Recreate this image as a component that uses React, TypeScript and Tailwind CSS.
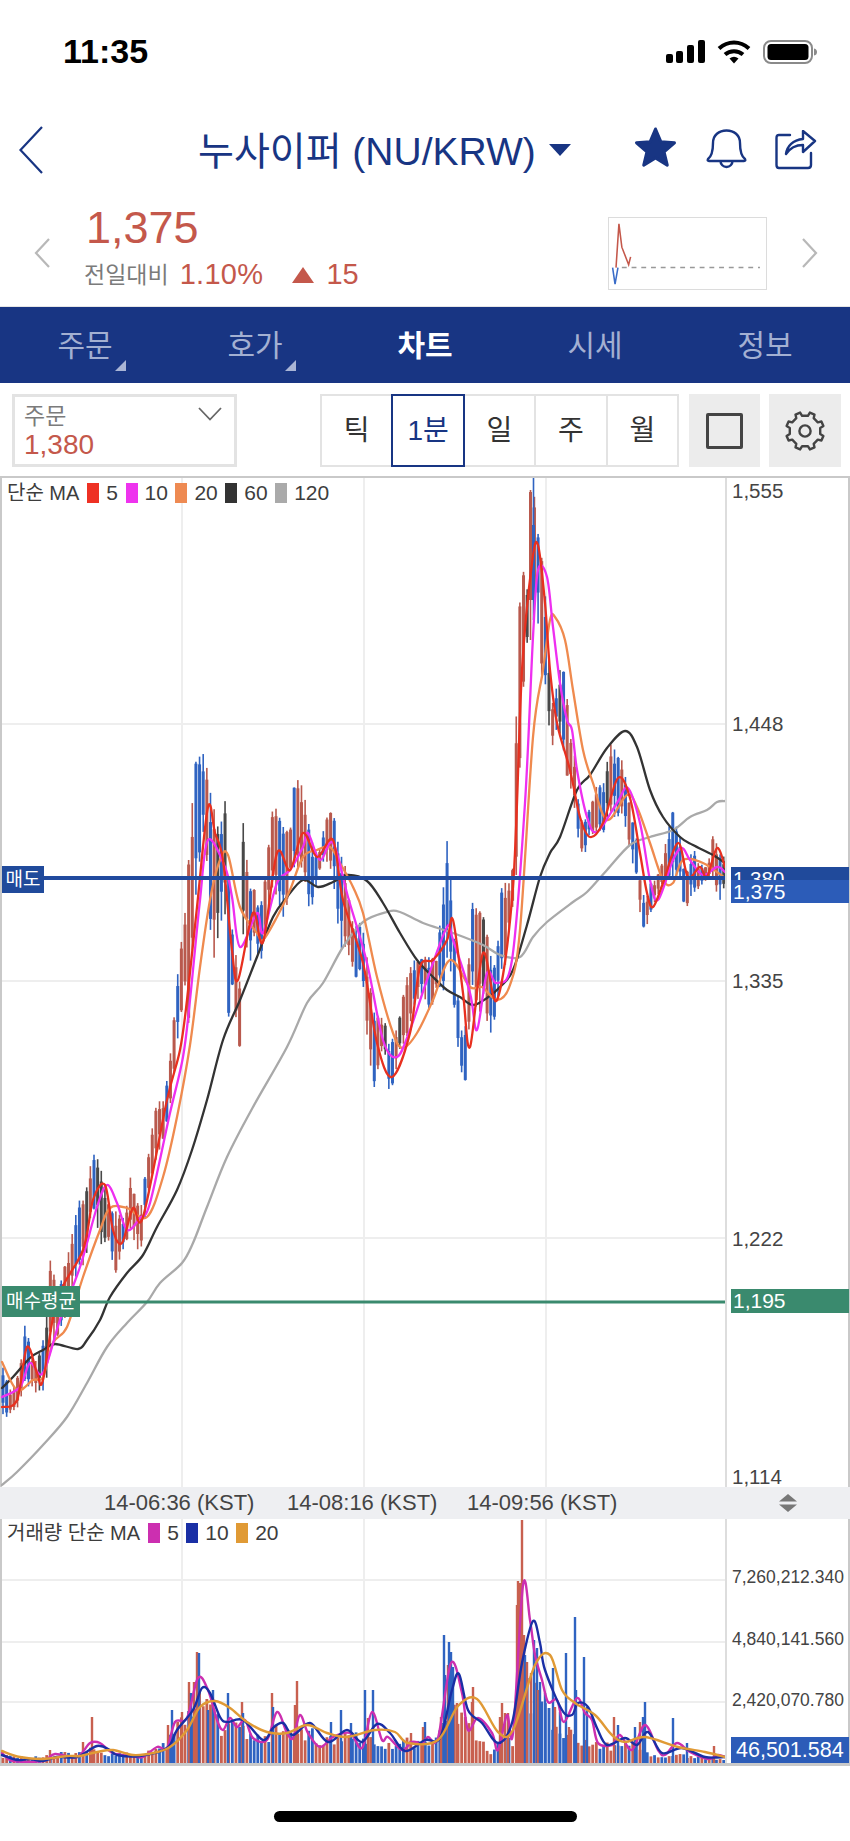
import React from 'react';

type Pt = [number, number];

const NAVY = '#183583';
const RED = '#c4584b';
const CANDLE_RED = '#b9594d';
const BLUE = '#2f63c1';

const ma120: Pt[] = [[2,1485],[17,1472],[43,1445],[67,1417],[87,1383],[107,1347],[127,1323],[147,1302],[160,1283],[182,1263],[193,1243],[207,1207],[227,1157],[253,1107],[287,1047],[307,1003],[323,983],[343,947],[363,922],[387,912],[400,912],[423,923],[453,933],[483,945],[500,955],[520,957],[533,937],[547,922],[573,902],[587,892],[607,870],[630,845],[650,837],[673,830],[690,817],[707,810],[717,802],[725,801]];
const ma60: Pt[] = [[2,1388],[13,1377],[30,1358],[43,1350],[55,1344],[78,1349],[87,1340],[100,1320],[110,1297],[127,1273],[143,1255],[157,1227],[177,1190],[192,1150],[207,1100],[223,1040],[240,1000],[257,957],[273,917],[287,897],[303,880],[318,887],[333,882],[347,875],[367,881],[383,903],[400,933],[417,960],[433,977],[447,990],[460,997],[473,1005],[487,998],[500,987],[513,970],[527,925],[540,877],[550,853],[560,837],[577,790],[590,775],[607,748],[625,731],[637,747],[650,790],[663,817],[680,837],[693,845],[713,855],[725,863]];
const ma20: Pt[] = [[2,1362],[17,1390],[33,1380],[43,1377],[53,1343],[67,1327],[83,1277],[100,1230],[110,1208],[127,1208],[147,1217],[163,1177],[177,1117],[190,1045],[200,967],[210,900],[220,860],[228,855],[240,907],[257,933],[263,940],[277,917],[290,890],[303,857],[317,850],[330,847],[340,863],[353,887],[363,913],[377,977],[393,1033],[403,1048],[417,1033],[433,1000],[450,960],[470,987],[482,987],[497,1000],[510,985],[520,930],[533,737],[543,670],[550,620],[555,617],[565,640],[573,690],[583,750],[593,783],[607,820],[627,795],[637,807],[650,843],[663,880],[673,883],[683,860],[703,863],[725,878]];
const ma10: Pt[] = [[2,1397],[20,1387],[30,1363],[43,1373],[60,1320],[80,1267],[97,1207],[107,1185],[117,1203],[127,1230],[140,1218],[150,1203],[170,1113],[183,1057],[190,1000],[200,900],[208,840],[225,867],[232,897],[240,947],[257,913],[263,933],[277,883],[290,870],[303,847],[308,833],[320,860],[333,843],[348,897],[367,963],[383,1040],[397,1057],[410,1030],[427,980],[447,927],[453,940],[470,993],[477,1030],[487,973],[497,983],[512,960],[525,803],[533,637],[538,570],[547,577],[553,627],[560,683],[567,720],[572,730],[577,770],[587,817],[597,832],[617,803],[628,788],[640,823],[650,880],[658,900],[673,860],[682,848],[690,860],[703,875],[717,867],[725,872]];
const ma5: Pt[] = [[2,1407],[17,1400],[27,1347],[37,1373],[43,1380],[57,1300],[83,1250],[93,1200],[105,1185],[113,1230],[122,1243],[133,1208],[143,1217],[167,1100],[180,1050],[187,1000],[197,907],[208,807],[215,833],[223,860],[232,950],[238,980],[253,913],[263,942],[277,853],[290,870],[303,833],[317,857],[333,840],[343,900],[363,963],[377,1043],[392,1077],[410,1033],[420,967],[433,960],[447,940],[453,920],[463,993],[470,1047],[483,953],[497,1000],[513,887],[522,670],[532,563],[538,545],[545,603],[550,670],[557,723],[570,770],[580,817],[590,837],[603,823],[618,778],[630,798],[640,853],[647,893],[653,907],[663,883],[678,843],[688,877],[700,867],[707,877],[717,848],[725,867]];

const volMa5: Pt[] = [[2,1753],[13,1761],[43,1761],[55,1754],[77,1757],[90,1743],[100,1743],[113,1753],[133,1756],[143,1757],[157,1747],[167,1748],[175,1722],[187,1718],[198,1678],[208,1690],[217,1720],[223,1730],[230,1718],[237,1727],[245,1720],[253,1738],[267,1740],[277,1712],[287,1733],[293,1738],[300,1715],[308,1733],[320,1747],[333,1737],[350,1733],[362,1748],[372,1712],[382,1740],[388,1737],[402,1750],[412,1742],[422,1743],[428,1737],[438,1738],[451,1663],[462,1693],[468,1730],[478,1718],[492,1733],[498,1750],[507,1715],[513,1733],[523,1585],[530,1620],[535,1655],[542,1680],[548,1702],[557,1700],[564,1722],[577,1698],[585,1713],[592,1720],[598,1743],[612,1745],[620,1735],[632,1750],[645,1725],[658,1750],[665,1755],[677,1743],[690,1752],[708,1759],[718,1755],[725,1757]];
const volMa10: Pt[] = [[2,1755],[17,1760],[30,1759],[43,1761],[57,1757],[77,1757],[97,1746],[110,1750],[117,1755],[140,1756],[167,1748],[177,1730],[193,1710],[202,1688],[210,1693],[220,1717],[227,1722],[243,1720],[263,1740],[273,1728],[283,1723],[293,1735],[310,1723],[328,1742],[347,1730],[362,1742],[377,1724],[390,1733],[405,1751],[425,1740],[440,1738],[452,1690],[459,1674],[468,1710],[482,1723],[498,1743],[512,1723],[522,1663],[533,1621],[540,1643],[545,1670],[562,1710],[572,1715],[578,1703],[588,1707],[597,1728],[607,1745],[625,1738],[637,1745],[648,1732],[662,1753],[682,1748],[705,1757],[725,1757]];
const volMa20: Pt[] = [[2,1751],[20,1757],[43,1759],[67,1756],[80,1756],[97,1752],[113,1750],[133,1755],[153,1753],[170,1747],[187,1730],[200,1707],[215,1701],[230,1708],[247,1722],[267,1732],[287,1733],[307,1725],[327,1733],[347,1737],[375,1730],[395,1732],[408,1743],[438,1740],[458,1706],[477,1699],[498,1732],[513,1730],[535,1665],[550,1655],[562,1690],[575,1703],[595,1715],[612,1735],[625,1742],[645,1737],[678,1747],[705,1752],[725,1757]];

// x, high, low as read off the candles
const envelope: [number, number, number][] = [[3,1370,1415],[12,1393,1415],[20,1370,1403],[25,1325,1380],[35,1363,1392],[45,1337,1392],[50,1257,1347],[58,1290,1333],[68,1257,1310],[78,1200,1267],[85,1200,1267],[92,1153,1200],[100,1165,1243],[110,1210,1243],[115,1210,1277],[125,1220,1243],[130,1177,1230],[140,1213,1255],[147,1165,1200],[155,1107,1163],[165,1097,1133],[172,1040,1097],[178,970,1033],[185,913,987],[188,867,1033],[195,763,900],[203,753,833],[208,773,867],[212,803,970],[220,833,923],[225,798,913],[228,867,1027],[232,927,980],[240,983,1050],[243,822,933],[250,887,963],[255,890,933],[260,913,970],[265,880,933],[272,810,887],[278,810,897],[285,833,923],[290,833,873],[295,777,867],[303,787,867],[310,833,913],[318,857,877],[325,820,857],[333,810,877],[340,857,947],[345,863,947],[350,913,957],[355,927,980],[362,923,967],[368,967,1050],[375,1017,1093],[380,1017,1050],[385,1020,1050],[388,1047,1093],[393,1037,1083],[400,1017,1047],[408,970,1037],[415,960,1000],[423,960,993],[430,957,1013],[437,960,983],[445,867,990],[448,833,943],[453,917,993],[460,1027,1070],[465,1033,1083],[472,902,983],[478,913,1020],[483,913,993],[490,953,1037],[497,970,1013],[500,890,970],[505,880,970],[508,890,937],[513,867,903],[517,683,870],[518,640,820],[522,560,713],[525,580,660],[527,593,650],[530,500,547],[532,490,547],[533,478,603],[537,527,603],[540,547,660],[543,570,683],[547,617,683],[550,683,750],[553,707,743],[557,683,730],[562,662,737],[567,697,777],[570,740,787],[573,730,787],[577,797,843],[580,797,833],[583,833,867],[587,810,843],[590,810,833],[597,787,833],[603,787,833],[610,743,810],[617,753,820],[623,763,810],[630,810,853],[637,843,877],[640,877,910],[645,900,937],[650,887,913],[655,880,900],[663,860,883],[672,810,877],[680,837,877],[685,880,913],[693,845,890],[700,867,890],[708,867,877],[713,833,877],[720,853,902],[725,860,885]];

const volBase: Pt[] = [[2,1755],[30,1758],[50,1755],[90,1750],[100,1752],[140,1754],[160,1750],[175,1730],[190,1700],[200,1700],[215,1715],[240,1730],[260,1730],[290,1730],[320,1735],[360,1735],[385,1742],[410,1740],[430,1745],[440,1720],[452,1690],[462,1710],[475,1730],[490,1750],[500,1740],[515,1740],[520,1640],[530,1680],[545,1710],[560,1730],[580,1735],[590,1740],[600,1745],[620,1745],[635,1740],[650,1755],[680,1755],[710,1758],[724,1760]];
const volSpikes: [number, number, 'r' | 'b'][] = [[92,1717,'r'],[83,1742,'r'],[50,1750,'r'],[172,1710,'b'],[168,1725,'r'],[182,1712,'r'],[189,1682,'r'],[194,1682,'r'],[191,1693,'b'],[197,1652,'r'],[199,1653,'b'],[213,1690,'b'],[208,1710,'b'],[228,1693,'b'],[242,1702,'r'],[243,1713,'b'],[272,1693,'r'],[273,1707,'b'],[297,1681,'r'],[295,1705,'r'],[331,1722,'b'],[341,1710,'b'],[351,1723,'b'],[365,1690,'b'],[373,1690,'b'],[368,1718,'r'],[411,1733,'r'],[425,1722,'b'],[423,1727,'r'],[444,1635,'b'],[445,1675,'b'],[441,1717,'r'],[448,1665,'r'],[449,1642,'b'],[451,1652,'b'],[453,1667,'b'],[457,1703,'r'],[473,1687,'r'],[472,1702,'r'],[502,1703,'r'],[500,1717,'r'],[505,1713,'r'],[508,1713,'r'],[517,1605,'r'],[518,1581,'r'],[520,1583,'r'],[522,1520,'r'],[524,1635,'r'],[525,1655,'b'],[527,1662,'r'],[534,1640,'b'],[537,1648,'b'],[531,1673,'r'],[538,1690,'r'],[540,1682,'b'],[545,1693,'b'],[553,1668,'b'],[555,1707,'r'],[560,1712,'b'],[566,1653,'b'],[569,1727,'r'],[575,1617,'b'],[576,1690,'b'],[584,1657,'b'],[587,1707,'b'],[614,1717,'r'],[618,1725,'b'],[635,1727,'b'],[643,1717,'b'],[645,1702,'b'],[640,1722,'r'],[673,1718,'b'],[687,1743,'b'],[714,1746,'r']];

function rng(seed: number) {
  let s = seed;
  return () => {
    s = (s * 16807) % 2147483647;
    return (s - 1) / 2147483646;
  };
}

function lerp(rows: number[][], x: number, col: number) {
  for (let i = 1; i < rows.length; i++) {
    if (x <= rows[i][0]) {
      const a = rows[i - 1];
      const b = rows[i];
      return a[col] + ((b[col] - a[col]) * (x - a[0])) / (b[0] - a[0] || 1);
    }
  }
  return rows[rows.length - 1][col];
}

// catmull-rom through the traced points
function smooth(pts: Pt[]) {
  let d = `M${pts[0][0]} ${pts[0][1]}`;
  for (let i = 0; i < pts.length - 1; i++) {
    const p0 = pts[i - 1] || pts[i];
    const p1 = pts[i];
    const p2 = pts[i + 1];
    const p3 = pts[i + 2] || p2;
    const c1x = p1[0] + (p2[0] - p0[0]) / 6;
    const c1y = p1[1] + (p2[1] - p0[1]) / 6;
    const c2x = p2[0] - (p3[0] - p1[0]) / 6;
    const c2y = p2[1] - (p3[1] - p1[1]) / 6;
    d += `C${c1x.toFixed(1)} ${c1y.toFixed(1)} ${c2x.toFixed(1)} ${c2y.toFixed(1)} ${p2[0]} ${p2[1]}`;
  }
  return d;
}

function buildCandles() {
  const r = rng(4711);
  const out: { x: number; h: number; l: number; t: number; b: number; c: string }[] = [];
  for (let x = 3; x < 725; x += 3.64) {
    const h = lerp(envelope, x, 1) + (r() - 0.5) * 5;
    const l = lerp(envelope, x, 2) - (r() - 0.5) * 5;
    const span = Math.max(l - h, 4);
    const t = h + span * r() * 0.25;
    const b = l - span * r() * 0.35;
    const trend = lerp(envelope, x - 8, 1) - lerp(envelope, x + 8, 1);
    const roll = r();
    const c = roll < 0.09 ? '#484848' : r() < (trend > 0 ? 0.62 : 0.42) ? CANDLE_RED : BLUE;
    out.push({ x, h: Math.max(h, 478), l, t: Math.max(t, 478), b, c });
  }
  // the spike at the session high
  out.push({ x: 530.5, h: 490, l: 640, t: 492, b: 600, c: CANDLE_RED });
  out.push({ x: 533.5, h: 478, l: 620, t: 525, b: 600, c: BLUE });
  return out;
}

function buildVolume() {
  const r = rng(99);
  const out: { x: number; y: number; c: string }[] = [];
  for (let x = 3; x < 725; x += 3.64) {
    const base = lerp(volBase, x, 1);
    const y = 1762 - (1762 - base) * (0.6 + r() * 0.6);
    out.push({ x, y, c: r() < 0.5 ? '#c8604f' : BLUE });
  }
  return out;
}

function gearPath(cx: number, cy: number) {
  const n = 8;
  const pts: string[] = [];
  for (let i = 0; i < n; i++) {
    const a = (i / n) * Math.PI * 2 - Math.PI / 8;
    const w = Math.PI / n;
    const steps: [number, number][] = [[-0.52, 15.5], [-0.34, 19], [0.34, 19], [0.52, 15.5]];
    steps.forEach(([o, rad]) => {
      const ang = a + o * w;
      pts.push(`${(cx + Math.cos(ang) * rad).toFixed(1)} ${(cy + Math.sin(ang) * rad).toFixed(1)}`);
    });
  }
  return `M${pts.join('L')}Z`;
}

const candles = buildCandles();
const volBars = buildVolume();

function Legend({ items }: { items: { color: string; label: string }[] }) {
  return (
    <>
      {items.map((it) => (
        <React.Fragment key={it.label}>
          <span className="w-[12px] h-[20px]" style={{ backgroundColor: it.color }} />
          <span className="ml-[7px] mr-[7.5px] text-[21px]">{it.label}</span>
        </React.Fragment>
      ))}
    </>
  );
}

function PriceChart() {
  return (
    <svg width="850" height="1009" viewBox="0 478 850 1009" className="absolute inset-0">
      {[182, 364, 546].map((x) => (
        <line key={x} x1={x} x2={x} y1="478" y2="1487" stroke="#eeeeee" strokeWidth="2" />
      ))}
      {[724, 981, 1238].map((y) => (
        <line key={y} x1="2" x2="726" y1={y} y2={y} stroke="#eeeeee" strokeWidth="2" />
      ))}
      {candles.map((c) => (
        <g key={c.x} fill={c.c}>
          <rect x={c.x - 0.8} y={c.h} width="1.6" height={Math.max(c.l - c.h, 1)} />
          <rect x={c.x - 1.5} y={c.t} width="3" height={Math.max(c.b - c.t, 1)} />
        </g>
      ))}
      <g fill="none" strokeWidth="2.3" strokeLinejoin="round" strokeLinecap="round">
        <path d={smooth(ma120)} stroke="#a9a9a9" />
        <path d={smooth(ma60)} stroke="#333333" />
        <path d={smooth(ma20)} stroke="#ef8a4e" />
        <path d={smooth(ma10)} stroke="#ee2ff0" />
        <path d={smooth(ma5)} stroke="#e8301f" />
      </g>
      <rect x="2" y="876" width="724" height="4" fill="#214a9e" />
      <rect x="2" y="1300.5" width="724" height="3" fill="#3a8a6e" />
      <line x1="726" x2="726" y1="478" y2="1487" stroke="#dddddd" strokeWidth="2" />
    </svg>
  );
}

function VolumeChart() {
  return (
    <svg width="850" height="244" viewBox="0 1519 850 244" className="absolute inset-0">
      {[182, 364, 546].map((x) => (
        <line key={x} x1={x} x2={x} y1="1519" y2="1763" stroke="#eeeeee" strokeWidth="2" />
      ))}
      {[1580, 1642, 1702].map((y) => (
        <line key={y} x1="2" x2="726" y1={y} y2={y} stroke="#eeeeee" strokeWidth="2" />
      ))}
      {volBars.map((b) => (
        <rect key={b.x} x={b.x - 1.4} y={b.y} width="2.8" height={1763 - b.y} fill={b.c} />
      ))}
      {volSpikes.map(([x, y, c]) => (
        <rect key={`${x}-${y}`} x={x - 1.2} y={y} width="2.4" height={1763 - y} fill={c === 'r' ? '#c8604f' : BLUE} />
      ))}
      <g fill="none" strokeWidth="2.4" strokeLinejoin="round" strokeLinecap="round">
        <path d={smooth(volMa5)} stroke="#cc2fb0" />
        <path d={smooth(volMa10)} stroke="#1a2fa5" />
        <path d={smooth(volMa20)} stroke="#e09a35" />
      </g>
      <line x1="726" x2="726" y1="1519" y2="1763" stroke="#dddddd" strokeWidth="2" />
    </svg>
  );
}

export default function App() {
  return (
    <div className="w-[850px] h-[1841px] bg-white overflow-hidden font-['Liberation_Sans','Noto_Sans_CJK_KR',sans-serif]">
      {/* status bar */}
      <div className="h-[104px] flex items-start justify-between pt-[33px] pl-[63px] pr-[32px]">
        <span className="text-[34px] leading-[37px] font-semibold text-black">11:35</span>
        <div className="flex items-start pt-[7px]">
          <svg width="40" height="24" viewBox="0 0 40 24">
            <rect x="0" y="14" width="7" height="9" rx="2" fill="#000" />
            <rect x="10" y="11" width="7" height="12" rx="2" fill="#000" />
            <rect x="21" y="5" width="7" height="18" rx="2" fill="#000" />
            <rect x="32" y="0" width="7" height="23" rx="2" fill="#000" />
          </svg>
          <svg width="34" height="24" viewBox="0 0 34 24" className="ml-[11px]">
            <path d="M2 8.5C11 0.5 23 0.5 32 8.5" fill="none" stroke="#000" strokeWidth="4" />
            <path d="M8 14.5C13 10 21 10 26 14.5" fill="none" stroke="#000" strokeWidth="4" />
            <path d="M12.5 18.5Q17 15 21.5 18.5L17 23.5Z" fill="#000" />
          </svg>
          <svg width="55" height="24" viewBox="0 0 55 24" className="ml-[12px]">
            <rect x="1" y="1" width="48" height="22" rx="7" fill="none" stroke="#8a8a8a" strokeWidth="2" />
            <rect x="4.5" y="4" width="41" height="16" rx="3.5" fill="#000" />
            <path d="M51 8.5C53.5 9 54 10.5 54 12C54 13.5 53.5 15 51 15.5Z" fill="#8a8a8a" />
          </svg>
        </div>
      </div>

      {/* title row */}
      <div className="h-[92px] flex items-start">
        <svg width="26" height="50" viewBox="0 0 26 50" className="ml-[18px] mt-[21px]">
          <path d="M24 2L2.5 25L24 48" fill="none" stroke={NAVY} strokeWidth="2.2" />
        </svg>
        <span className="ml-[154px] mt-[24px] text-[39px] leading-[48px] whitespace-nowrap" style={{ color: NAVY }}>
          누사이퍼 (NU/KRW)
        </span>
        <svg width="22" height="12" viewBox="0 0 22 12" className="ml-[13px] mt-[40px]">
          <path d="M0 0H22L11 12Z" fill={NAVY} />
        </svg>
        <svg width="45" height="42" viewBox="0 0 45 42" className="ml-[62px] mt-[23px]">
          <path
            d="M22.5 2L27.8 14.7L41.5 15.8L31.06 24.78L34.26 38.18L22.5 31L10.74 38.18L13.94 24.78L3.48 15.8L17.2 14.7Z"
            fill={NAVY}
            stroke={NAVY}
            strokeWidth="3"
            strokeLinejoin="round"
          />
        </svg>
        <svg width="41" height="42" viewBox="0 0 41 42" className="ml-[28px] mt-[25px]">
          <path
            d="M2 30C6 27 7 22 7 14C7 6 13 1.5 20.5 1.5C28 1.5 34 6 34 14C34 22 35 27 39 30Q40 32 38 32H3Q1 32 2 30Z"
            fill="none"
            stroke={NAVY}
            strokeWidth="2.4"
          />
          <path d="M14.5 32a6 6 0 0 0 12 0" fill="none" stroke={NAVY} strokeWidth="2.4" />
        </svg>
        <svg width="42" height="41" viewBox="0 0 42 41" className="ml-[28px] mt-[26px]">
          <path d="M15 5H4Q1.5 5 1.5 8V35Q1.5 38 4 38H33Q36 38 36 35V23" fill="none" stroke={NAVY} strokeWidth="2.4" strokeLinecap="round" />
          <path d="M11 24C12 16 18 10 28 9V1L40 11L28 22V15C21 15 15 18 11 24Z" fill="none" stroke={NAVY} strokeWidth="2.4" strokeLinejoin="round" />
        </svg>
      </div>

      {/* price row */}
      <div className="h-[111px] flex items-start">
        <svg width="18" height="32" viewBox="0 0 18 32" className="ml-[33px] mt-[41px]">
          <path d="M16 2L3 16L16 30" fill="none" stroke="#b8b8b8" strokeWidth="2.2" />
        </svg>
        <div className="ml-[33px] w-[524px] flex flex-col">
          <span className="ml-[2px] mt-[7px] text-[45px] leading-[50px]" style={{ color: RED }}>1,375</span>
          <div className="flex items-center mt-[6px] h-[32px]">
            <span className="text-[23px] text-[#7b7b7b]">전일대비</span>
            <span className="ml-[11px] text-[29px] tracking-[0.3px]" style={{ color: RED }}>1.10%</span>
            <svg width="22" height="16" viewBox="0 0 22 16" className="ml-[29px]">
              <path d="M11 0L22 16H0Z" fill={RED} />
            </svg>
            <span className="ml-[12px] text-[29px]" style={{ color: RED }}>15</span>
          </div>
        </div>
        <svg width="159" height="73" viewBox="608 217 159 73" className="mt-[21px] border border-[#dcdcdc]">
          <path d="M620 268H762" stroke="#999" strokeWidth="1.5" strokeDasharray="5 5" fill="none" />
          <path d="M614 268L617 223L620 247L627 265L629 257" stroke={RED} strokeWidth="1.6" fill="none" />
          <path d="M610.5 268L613 285L616 268" stroke="#3a6cc8" strokeWidth="1.6" fill="none" />
        </svg>
        <svg width="18" height="32" viewBox="0 0 18 32" className="ml-[34px] mt-[41px]">
          <path d="M2 2L15 16L2 30" fill="none" stroke="#b8b8b8" strokeWidth="2.2" />
        </svg>
      </div>

      {/* tabs */}
      <div className="h-[76px] border-t-[1px] border-[#183583] grid grid-cols-5 items-center shadow-[0_-1px_0_#e6e6e6]" style={{ backgroundColor: NAVY }}>
        {['주문', '호가', '차트', '시세', '정보'].map((t, i) => (
          <div key={t} className="relative h-full flex items-center justify-center">
            <span className={i === 2 ? 'text-[30px] font-bold text-white' : 'text-[30px] text-[#a3b0d2]'}>{t}</span>
            {i < 2 && (
              <svg width="11" height="11" viewBox="0 0 11 11" className="absolute left-[115px] top-[52px]">
                <path d="M11 0V11H0Z" fill="#a9b5d6" />
              </svg>
            )}
          </div>
        ))}
      </div>

      {/* toolbar */}
      <div className="h-[93px] flex items-start pt-[11px] pl-[12px]">
        <div className="relative w-[225px] h-[73px] border-[3px] border-[#e3e3e3] pl-[9px] pt-[7px]">
          <div className="text-[23px] leading-[25px] text-[#7b7b7b]">주문</div>
          <div className="text-[28px] leading-[32px]" style={{ color: RED }}>1,380</div>
          <svg width="26" height="14" viewBox="0 0 26 14" className="absolute right-[11px] top-[10px]">
            <path d="M2 1L13 12.5L24 1" fill="none" stroke="#666" strokeWidth="1.8" />
          </svg>
        </div>
        <div className="ml-[83px] flex">
          {['틱', '1분', '일', '주', '월'].map((t, i) => (
            <div
              key={t}
              className={
                i === 1
                  ? 'relative z-10 w-[73.4px] h-[73px] -ml-[2px] border-[2.5px] border-[#183583] text-[#183583] flex items-center justify-center text-[28px]'
                  : i === 0
                    ? 'w-[73.4px] h-[73px] border-[2.5px] border-[#e3e3e3] text-[#333333] flex items-center justify-center text-[28px]'
                    : 'w-[73.4px] h-[73px] -ml-[2px] border-[2.5px] border-[#e3e3e3] text-[#333333] flex items-center justify-center text-[28px]'
              }
            >
              {t}
            </div>
          ))}
        </div>
        <div className="ml-[10px] w-[71px] h-[73px] bg-[#ececec] flex items-center justify-center">
          <div className="w-[37px] h-[36px] border-[3px] border-[#444444] rounded-[2px]" />
        </div>
        <div className="ml-[9px] w-[72px] h-[73px] bg-[#ececec] flex items-center justify-center">
          <svg width="44" height="44" viewBox="0 0 44 44">
            <path d={gearPath(22, 22)} fill="none" stroke="#444" strokeWidth="2.4" strokeLinejoin="round" />
            <circle cx="22" cy="22" r="5.6" fill="none" stroke="#444" strokeWidth="2.4" />
          </svg>
        </div>
      </div>

      {/* chart frame */}
      <div className="border-x-2 border-t-2 border-b-[3px] border-[#c9c9c9] h-[1290px] flex flex-col box-border">
        <div className="relative h-[1009px] -mx-[2px]">
          <PriceChart />
          <div className="absolute left-[7px] top-[3px] h-[24px] flex items-center text-[20px] text-[#3d3d3d] whitespace-nowrap">
            <span className="mr-[8px]">단순 MA</span>
            <Legend items={[{ color: '#ee3124', label: '5' }, { color: '#ee33ee', label: '10' }, { color: '#ee8a52', label: '20' }, { color: '#333333', label: '60' }, { color: '#aaaaaa', label: '120' }]} />
          </div>
          {[['1,555', 1], ['1,448', 234], ['1,335', 491], ['1,222', 749], ['1,114', 987]].map(([v, top]) => (
            <span key={v} className="absolute left-[732px] text-[20.5px] leading-[24px] text-[#444444]" style={{ top: Number(top) }}>{v}</span>
          ))}
          <div className="absolute left-[2px] top-[388px] w-[42px] h-[27px] bg-[#204a9b] text-white text-[19px] leading-[27px] text-center">매도</div>
          <div className="absolute left-[731px] top-[389px] w-[118px] h-[24px] pl-[2px] bg-[#204a9b] text-white text-[20.5px] leading-[24px]">1,380</div>
          <div className="absolute left-[731px] top-[402px] w-[118px] h-[23px] pl-[2px] bg-[#2c5cb8] text-white text-[21px] leading-[23px]">1,375</div>
          <div className="absolute left-[2px] top-[808px] w-[78px] h-[31px] bg-[#3a8a6e] text-white text-[19px] leading-[31px] text-center whitespace-nowrap">매수평균</div>
          <div className="absolute left-[731px] top-[811px] w-[118px] h-[24px] pl-[2px] bg-[#3a8a6e] text-white text-[21px] leading-[24px]">1,195</div>
        </div>

        <div className="relative h-[32px] bg-[#eeeff2] text-[22px] leading-[32px] text-[#444444] whitespace-nowrap -mx-[2px]">
          <span className="absolute left-[104px]">14-06:36 (KST)</span>
          <span className="absolute left-[287px]">14-08:16 (KST)</span>
          <span className="absolute left-[467px]">14-09:56 (KST)</span>
          <svg width="18" height="18" viewBox="0 0 18 18" className="absolute left-[779px] top-[7px]">
            <path d="M9 0L18 7.5H0Z" fill="#777" />
            <path d="M0 10.5H18L9 18Z" fill="#777" />
          </svg>
        </div>

        <div className="relative h-[244px] -mx-[2px]">
          <VolumeChart />
          <div className="absolute left-[7px] top-[2px] h-[24px] flex items-center text-[20px] text-[#3d3d3d] whitespace-nowrap">
            <span className="mr-[8px]">거래량 단순 MA</span>
            <Legend items={[{ color: '#cc2fb0', label: '5' }, { color: '#1a2fa5', label: '10' }, { color: '#e09a35', label: '20' }]} />
          </div>
          {[['7,260,212.340', 47], ['4,840,141.560', 109], ['2,420,070.780', 170]].map(([v, top]) => (
            <span key={v} className="absolute left-[732px] text-[17.5px] leading-[22px] text-[#444444] whitespace-nowrap" style={{ top: Number(top) }}>{v}</span>
          ))}
          <div className="absolute left-[731px] top-[218px] w-[118px] h-[26px] pl-[5px] bg-[#2c5cb8] text-white text-[21.5px] leading-[26px] whitespace-nowrap">46,501.584</div>
        </div>
      </div>

      {/* home indicator */}
      <div className="mt-[45px] mx-auto w-[303px] h-[11px] rounded-full bg-black" />
    </div>
  );
}
